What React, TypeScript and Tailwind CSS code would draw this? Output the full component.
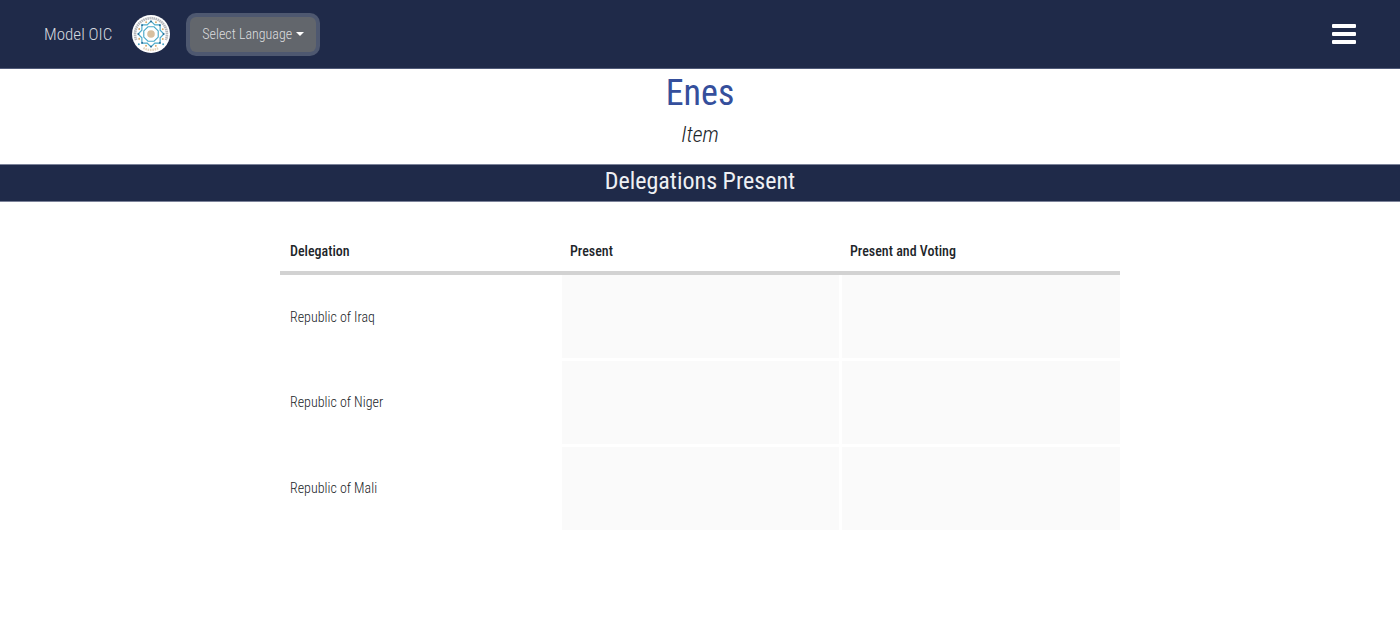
import React, { useState } from 'react';

const delegations = ['Republic of Iraq', 'Republic of Niger', 'Republic of Mali'];

const columns = ['Delegation', 'Present', 'Present and Voting'];

const points = [0, 45, 90, 135, 180, 225, 270, 315];

const Logo: React.FC = () => (
  <svg className="size-[38px]" viewBox="0 0 100 100" aria-hidden="true">
    <circle cx="50" cy="50" r="50" fill="#ffffff" />
    {/* lettering ring */}
    <path
      d="M11 66 A42 42 0 1 1 89 66"
      fill="none"
      stroke="#b4b7bb"
      strokeWidth="7"
      strokeDasharray="4 1.5"
    />
    <path
      d="M30 87 A42 42 0 0 0 70 87"
      fill="none"
      stroke="#e3d3bb"
      strokeWidth="6"
      strokeDasharray="4 2"
    />
    <circle cx="18" cy="77" r="2.5" fill="#4ba3c3" />
    <circle cx="82" cy="77" r="2.5" fill="#4ba3c3" />
    {/* eight pointed star */}
    <g fill="none" stroke="#4aa9c9" strokeWidth="3">
      <path d="M50 16 L60 26 H74 V40 L84 50 L74 60 V74 H60 L50 84 L40 74 H26 V60 L16 50 L26 40 V26 H40 Z" />
      <path d="M42 31 H58 L69 42 V58 L58 69 H42 L31 58 V42 Z" />
    </g>
    {points.map((angle) => (
      <g key={angle} transform={`rotate(${angle} 50 50)`}>
        <circle cx="50" cy="17" r="2.5" fill="#2b6b96" />
        <circle cx="63" cy="19" r="2.5" fill="#d9a766" />
      </g>
    ))}
    <circle cx="50" cy="50" r="10" fill="#d8c0a0" />
  </svg>
);

const App: React.FC = () => {
  const [menuOpen, setMenuOpen] = useState(false);

  return (
    <div className="min-h-screen bg-white font-['Roboto_Condensed','Liberation_Sans_Narrow','Lato',sans-serif] text-sm text-[#212529]">
      <header className="flex h-[69px] items-center justify-between border-b border-[#505a78] bg-[#1f2a49] px-11">
        <div className="flex items-center gap-5">
          <a href="#" className="flex items-center gap-5 text-[17px] font-light text-[#d5d8df]">
            Model OIC
            <Logo />
          </a>
          <button
            type="button"
            aria-haspopup="menu"
            className="flex h-[35px] items-center gap-1 rounded-md bg-[#62666c] px-3 font-light text-[#dcdddf] ring-4 ring-[#4e5870]"
          >
            Select Language
            <svg className="h-1 w-2" viewBox="0 0 8 4" fill="#ffffff" aria-hidden="true">
              <path d="M0 0 H8 L4 4 Z" />
            </svg>
          </button>
        </div>
        <button
          type="button"
          aria-label="Toggle navigation"
          aria-expanded={menuOpen}
          onClick={() => setMenuOpen((v) => !v)}
        >
          <svg className="h-6 w-6" viewBox="0 0 24 24" fill="#ffffff">
            <rect x="0" y="2" width="24" height="4" rx="1" />
            <rect x="0" y="10" width="24" height="4" rx="1" />
            <rect x="0" y="18" width="24" height="4" rx="1" />
          </svg>
        </button>
      </header>

      <main>
        <div className="pb-3 text-center">
          <h1 className="text-4xl leading-12 text-[#354f9c]">Enes</h1>
          <p className="text-[22px] leading-[35px] font-light italic">Item</p>
        </div>
        <h2 className="h-[38px] border-y border-[#7b8299] bg-[#1f2a49] text-center text-2xl leading-8 text-[#eef0f4]">
          Delegations Present
        </h2>

        <table className="mx-auto mt-7 w-3/5 table-fixed border-collapse text-left">
          <thead>
            <tr className="h-[43px] border-b-4 border-[#d2d2d2]">
              {columns.map((column) => (
                <th key={column} scope="col" className="px-2.5 font-medium">
                  {column}
                </th>
              ))}
            </tr>
          </thead>
          <tbody>
            {delegations.map((name) => (
              <tr key={name} className="h-[86px]">
                <th scope="row" className="px-2.5 font-light">
                  {name}
                </th>
                <td className="border-3 border-white bg-[#fafafa]" />
                <td className="border-3 border-r-0 border-white bg-[#fafafa]" />
              </tr>
            ))}
          </tbody>
        </table>
      </main>
    </div>
  );
};

export default App;
